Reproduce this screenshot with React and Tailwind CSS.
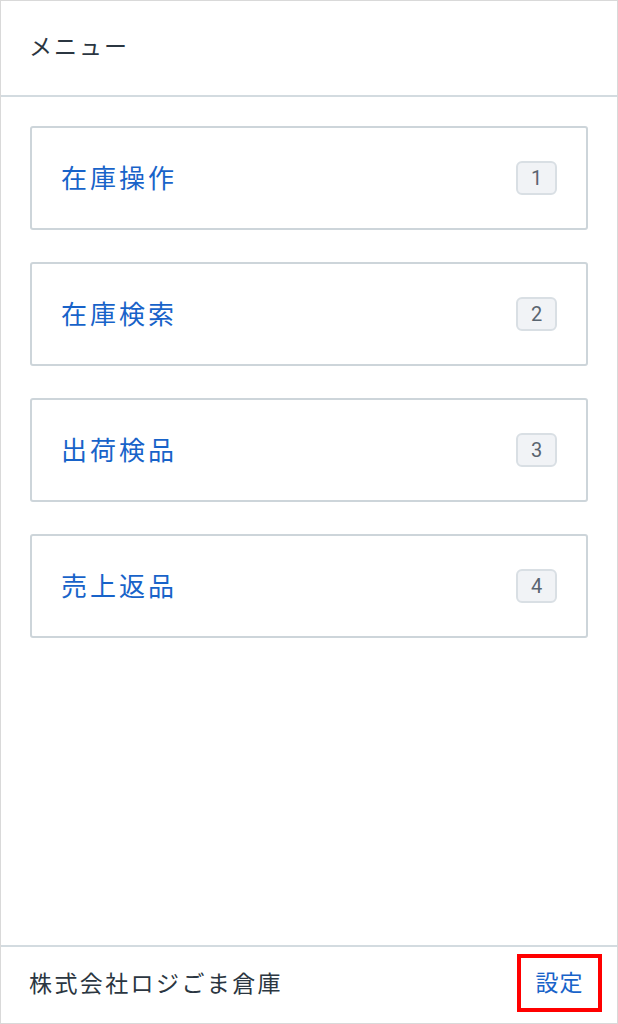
const ITEMS = [
  { label: '在庫操作', key: 1 },
  { label: '在庫検索', key: 2 },
  { label: '出荷検品', key: 3 },
  { label: '売上返品', key: 4 },
]

const FONT = { fontFamily: '"Noto Sans CJK JP", "Noto Sans", sans-serif' }

export default function App() {
  return (
    <div style={FONT} className="w-[618px] h-[1024px] bg-white border border-[#d9d9d9] flex flex-col">
      <header className="h-[96px] shrink-0 border-b-2 border-[#d3dbe0] flex items-center px-[28px] pb-[5px]">
        <h1 className="text-[23px] tracking-[2px] text-[#2b3641]">メニュー</h1>
      </header>

      <main className="flex-1 px-[29px] pt-[29px] flex flex-col gap-[32px]">
        {ITEMS.map((item) => (
          <div
            key={item.key}
            className="h-[104px] rounded-[3px] border-2 border-[#cdd5da] flex items-center justify-between pl-[29px] pr-[29px]"
          >
            <span className="-mt-[4px] text-[26px] tracking-[3px] text-[#1863c9]">{item.label}</span>
            <span className="w-[41px] h-[34px] rounded-[6px] border-2 border-[#d9dfe4] bg-[#f1f3f6] flex items-center justify-center text-[20px] text-[#5a6570]" style={{ fontFamily: 'Roboto, sans-serif' }}>
              {item.key}
            </span>
          </div>
        ))}
      </main>

      <footer className="h-[78px] shrink-0 border-t-2 border-[#d3dbe0] flex items-center justify-between pl-[28px] pr-[15px]">
        <span className="-mt-[5px] text-[23px] tracking-[2.4px] text-[#2b3641]">株式会社ロジごま倉庫</span>
        <button className="w-[85px] h-[58px] -mt-[5px] border-4 border-[#ff0000] flex items-center justify-center pb-[3px] text-[23px] tracking-[1px] text-[#1863c9]">
          設定
        </button>
      </footer>
    </div>
  )
}
